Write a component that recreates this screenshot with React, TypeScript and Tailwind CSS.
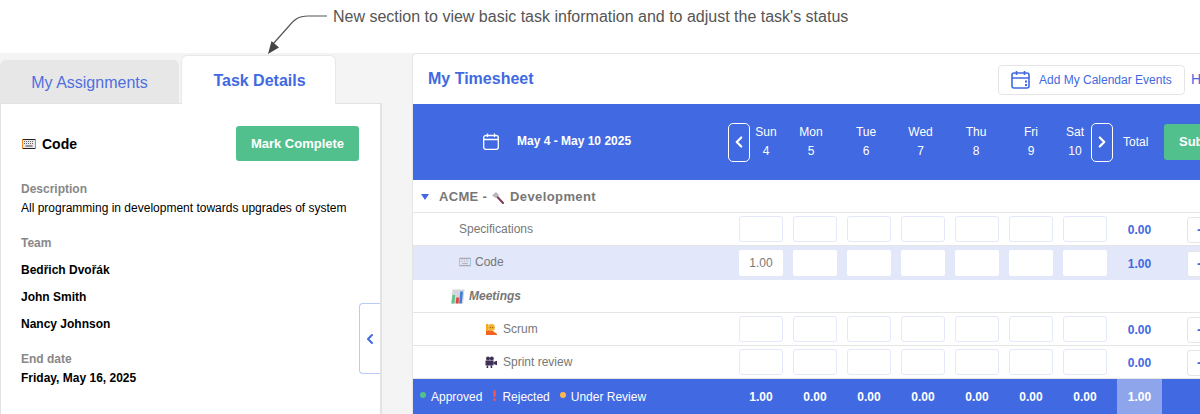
import React from "react";
import { ChevronLeft, ChevronRight } from "lucide-react";

const Keyboard = ({ muted }: { muted?: boolean }) => (
  <svg width={muted ? 12 : 14} height={muted ? 10 : 12} viewBox="0 0 14 12" className="shrink-0" style={{ opacity: muted ? 0.45 : 1 }}>
    <rect x="0" y="1" width="14" height="10" fill="#222" />
    <rect x="0" y="1" width="1" height="10" fill="#f08a24" />
    <rect x="13" y="1" width="1" height="10" fill="#4aa8e8" />
    <rect x="1" y="2" width="12" height="8" fill="#e9e9ef" />
    <path d="M2 3.5h10M2 5.5h10" stroke="#666" strokeWidth="1" strokeDasharray="1 1" />
    <path d="M3.5 8h7" stroke="#444" strokeWidth="1" />
  </svg>
);
const Hammer = () => (
  <svg width="13" height="13" viewBox="0 0 13 13" className="shrink-0">
    <path d="M5.5 5 12 12" stroke="#7d3b52" strokeWidth="2" strokeLinecap="round" />
    <path d="M1 4.5 5 1l3 3-3 3z" fill="#b9b5bd" />
  </svg>
);
const Chart = () => (
  <svg width="15" height="15" viewBox="0 0 15 15" className="shrink-0">
    <path d="M2.5 0.5h12l-1.5 14H1z" fill="#d5d5dc" />
    <path d="M2.5 6h2.6l-.7 8.5H1.6z" fill="#5cc48a" />
    <path d="M6.3 8.5H9l-.4 6H5.7z" fill="#e0453f" />
    <path d="M10.2 2.5h2.8l-1.2 12H9.2z" fill="#3f7fd6" />
  </svg>
);
const Hand = () => (
  <svg width="12" height="13" viewBox="0 0 12 13" className="shrink-0">
    <path d="M1 12V8l2-1 5 1 4 3v1z" fill="#f0641e" />
    <path d="M1 1h2.4v7H1z" fill="#f5a623" />
    <circle cx="6.5" cy="4.5" r="3.4" fill="#f5b22e" />
    <circle cx="5.5" cy="4.5" r="0.6" fill="#8a4a10" />
    <circle cx="7.8" cy="4.5" r="0.6" fill="#8a4a10" />
  </svg>
);
const Camera = () => (
  <svg width="12" height="12" viewBox="0 0 12 12" className="shrink-0">
    <circle cx="3" cy="2.5" r="2" fill="#3d2f55" />
    <circle cx="6.8" cy="2.5" r="2" fill="#3d2f55" />
    <rect x="0.5" y="4.5" width="8" height="5" fill="#3d2f55" />
    <path d="M8.5 6 12 4.8v4.4L8.5 8zM2 9.5h1.2V12H1.4zM5.6 9.5h1.2l.6 2.5H5.6z" fill="#3d2f55" />
  </svg>
);

const days: [string, string, string][] = [
  ["Sun", "4", "w-[30px]"],
  ["Mon", "5", "w-[60px]"],
  ["Tue", "6", "w-[50px]"],
  ["Wed", "7", "w-[59px]"],
  ["Thu", "8", "w-[52px]"],
  ["Fri", "9", "w-[58px]"],
  ["Sat", "10", "w-[30px]"],
];

const TaskRow = ({
  indent,
  icon,
  name,
  total,
  first,
  active,
}: {
  indent: string;
  icon?: React.ReactNode;
  name: string;
  total: string;
  first?: string;
  active?: boolean;
}) => (
  <div
    className={
      active
        ? "flex h-[34px] shrink-0 items-center bg-[#e2e7f9]"
        : "flex h-[33px] shrink-0 items-center border-b border-[#e5e5e5] bg-white"
    }
  >
    <div className={`flex w-[326px] shrink-0 items-center text-[12px] text-[#777] ${indent}`}>
      {icon}
      <span>{name}</span>
    </div>
    <div className="flex shrink-0 gap-[10px]">
      {[0, 1, 2, 3, 4, 5, 6].map((i) => (
        <input
          key={i}
          readOnly
          value={i === 0 && first ? first : ""}
          className={
            active
              ? "h-[26px] w-[44px] rounded-[2px] bg-white text-center text-[12px] text-[#777] outline-none"
              : "h-[26px] w-[44px] rounded-[3px] border border-[#e3e8fa] bg-white text-center text-[12px] text-[#777] outline-none"
          }
        />
      ))}
    </div>
    <div className="ml-[10px] mt-[2px] w-[45px] shrink-0 text-center text-[12px] font-bold text-[#4169e1]">{total}</div>
    <div className="ml-[25px] mt-[2px] flex h-[26px] w-[40px] shrink-0 items-center rounded-[3px] border border-[#e5e5e5] bg-white pb-[1px] pl-[9px] text-[14px] font-bold text-[#4169e1]">
      -
    </div>
  </div>
);

export default function App() {
  return (
    <div className="flex h-[414px] w-[1200px] flex-col overflow-hidden bg-white font-['Liberation_Sans',Arial,sans-serif]">
      <div className="relative h-[53px] shrink-0 pl-[333px] pt-[7px] text-[16px] leading-[20px] text-[#555]">
        New section to view basic task information and to adjust the task's status
        <svg width="70" height="46" viewBox="0 0 70 46" className="absolute left-[262px] top-[9px] z-10">
          <path d="M65 7H46C36 7 32 11 27 17L11 35" fill="none" stroke="#555" strokeWidth="1.2" />
          <path d="M6 45 9.5 32 17 38.5Z" fill="#444" />
        </svg>
      </div>

      <div className="flex min-h-0 flex-1 bg-[#f4f4f4]">
        <div className="flex w-[382px] shrink-0 flex-col">
          <div className="relative z-10 flex h-[50px] shrink-0 items-start gap-[2px]">
            <div className="mt-[7px] flex h-[43px] w-[179px] items-center justify-center rounded-t-[6px] bg-[#e7e7e7] pt-[3px] text-[16px] text-[#4f6fe0]">
              My Assignments
            </div>
            <div className="mt-[2px] flex h-[49px] w-[155px] items-center justify-center rounded-t-[6px] border border-b-0 border-[#e8e8e8] bg-white pl-[2px] pt-[2px] text-[16px] font-bold text-[#4169e1]">
              Task Details
            </div>
          </div>
          <div className="relative flex-1 border-l border-r-2 border-t border-[#e3e3e3] bg-white pl-[20px] pr-[21px]">
            <div className="mt-[22px] flex h-[35px] items-center justify-between">
              <div className="flex items-center gap-[6px] pl-[1px] pt-[1px] text-[14px] font-bold text-black">
                <Keyboard />
                <span>Code</span>
              </div>
              <button className="h-[35px] w-[123px] rounded-[3px] bg-[#52c08d] pt-[1px] text-[13px] font-bold text-white">
                Mark Complete
              </button>
            </div>
            <div className="mt-[21px] text-[12px] font-bold leading-[14px] text-[#888]">Description</div>
            <div className="mt-[5px] text-[12px] leading-[14px] text-black">
              All programming in development towards upgrades of system
            </div>
            <div className="mt-[21px] text-[12px] font-bold leading-[14px] text-[#888]">Team</div>
            <div className="mt-[13px] flex flex-col gap-[13px] text-[12px] font-bold leading-[14px] text-black">
              <div>Bedřich Dvořák</div>
              <div>John Smith</div>
              <div>Nancy Johnson</div>
            </div>
            <div className="mt-[21px] text-[12px] font-bold leading-[14px] text-[#888]">End date</div>
            <div className="mt-[5px] text-[12px] font-bold leading-[14px] text-black">Friday, May 16, 2025</div>
            <div className="absolute right-0 top-[199px] flex h-[71px] w-[21px] items-center justify-center rounded-l-[4px] border border-r-0 border-[#b9caf7] bg-white">
              <ChevronLeft size={16} strokeWidth={3} className="shrink-0 text-[#4169e1]" />
            </div>
          </div>
        </div>

        <div className="ml-[30px] flex w-[788px] shrink-0 flex-col overflow-hidden rounded-tl-[4px] border-l border-t border-[#e5e5e5] bg-white">
          <div className="flex h-[50px] shrink-0 items-center">
            <div className="w-[585px] shrink-0 pl-[15px] text-[16px] font-bold text-[#4169e1]">My Timesheet</div>
            <div className="mt-[1px] flex h-[30px] w-[187px] shrink-0 items-center gap-[9px] rounded-[4px] border border-[#e5e5e5] pl-[12px] text-[12px] text-[#4169e1]">
              <svg width="19" height="19" viewBox="0 0 19 19" fill="none" stroke="#4169e1" strokeWidth="1.6" className="shrink-0">
                <rect x="1" y="3" width="17" height="15" rx="2" />
                <path d="M1 8h17M5.5 1v4M13.5 1v4" />
                <path d="M14 11.5h2M14 15h2" strokeWidth="2" />
              </svg>
              <span>Add My Calendar Events</span>
            </div>
            <div className="ml-[6px] shrink-0 text-[14px] text-[#4169e1]">Help</div>
          </div>

          <div className="flex h-[76px] shrink-0 items-center bg-[#4169e1] pl-[70px] text-white">
            <svg width="16" height="17" viewBox="0 0 16 17" fill="none" stroke="white" strokeWidth="1.3" className="mt-[-2px] shrink-0">
              <rect x="0.7" y="2.5" width="14.6" height="13.8" rx="2" />
              <path d="M0.7 6.5h14.6M4.5 0.5v3.5M11.5 0.5v3.5" />
            </svg>
            <div className="mb-[3px] ml-[18px] w-[211px] shrink-0 text-[12px] font-bold">May 4 - May 10 2025</div>
            <div className="flex h-[39px] w-[22px] shrink-0 items-center justify-center rounded-[5px] border border-white">
              <ChevronLeft size={18} strokeWidth={3} className="shrink-0" />
            </div>
            <div className="ml-px flex shrink-0">
              {days.map(([d, n, w]) => (
                <div key={d} className={`${w} shrink-0 text-center text-[12px] leading-[19px]`}>
                  <div>{d}</div>
                  <div>{n}</div>
                </div>
              ))}
            </div>
            <div className="ml-px flex h-[39px] w-[22px] shrink-0 items-center justify-center rounded-[5px] border border-white">
              <ChevronRight size={18} strokeWidth={3} className="shrink-0" />
            </div>
            <div className="ml-[10px] w-[25px] shrink-0 text-center text-[12px]">Total</div>
            <div className="ml-[16px] flex h-[36px] w-[90px] shrink-0 items-center rounded-[3px] bg-[#52c08d] pl-[15px] text-[13px] font-bold">
              Submit
            </div>
          </div>

          <div className="flex h-[33px] shrink-0 items-center border-b border-[#e5e5e5] pl-[8px] pt-[2px] text-[13px] font-bold text-[#777]">
            <svg width="8" height="6" viewBox="0 0 8 6" className="shrink-0">
              <path d="M0 0h8L4 6z" fill="#4169e1" />
            </svg>
            <span className="ml-[10px] tracking-[0.3px]">ACME -</span>
            <span className="ml-[4px]">
              <Hammer />
            </span>
            <span className="ml-[6px] tracking-[0.4px]">Development</span>
          </div>
          <TaskRow indent="pl-[46px]" name="Specifications" total="0.00" />
          <TaskRow indent="gap-[4px] pb-[2px] pl-[46px]" icon={<Keyboard muted />} name="Code" total="1.00" first="1.00" active />
          <div className="flex h-[33px] shrink-0 items-center gap-[4px] border-b border-[#e5e5e5] pl-[37px] text-[12px] font-bold italic text-[#777]">
            <Chart />
            <span>Meetings</span>
          </div>
          <TaskRow indent="gap-[6px] pl-[72px]" icon={<Hand />} name="Scrum" total="0.00" />
          <TaskRow indent="gap-[6px] pl-[72px]" icon={<Camera />} name="Sprint review" total="0.00" />

          <div className="flex h-[35px] shrink-0 items-center bg-[#4169e1] text-[12px] text-white">
            <div className="flex w-[326px] shrink-0 items-center pl-[7px]">
              <span className="mb-[3px] h-[6px] w-[6px] shrink-0 rounded-full bg-[#52c08d]" />
              <span className="ml-[5px]">Approved</span>
              <span className="mb-[3px] ml-[10px] flex w-[5px] shrink-0 flex-col items-center gap-[1px]">
                <span className="h-[7px] w-[3px] rounded-full bg-[#ef5350]" />
                <span className="h-[3px] w-[3px] rounded-full bg-[#ef5350]" />
              </span>
              <span className="ml-[5px]">Rejected</span>
              <span className="mb-[3px] ml-[10px] h-[6px] w-[6px] shrink-0 rounded-full bg-[#fdb94d]" />
              <span className="ml-[5px]">Under Review</span>
            </div>
            <div className="flex shrink-0 gap-[10px]">
              {["1.00", "0.00", "0.00", "0.00", "0.00", "0.00", "0.00"].map((v, i) => (
                <div key={i} className="w-[44px] text-center font-bold">
                  {v}
                </div>
              ))}
            </div>
            <div className="ml-[10px] flex h-full w-[45px] shrink-0 items-center justify-center bg-[#8ea5ec] font-bold">1.00</div>
          </div>
        </div>
      </div>
    </div>
  );
}
